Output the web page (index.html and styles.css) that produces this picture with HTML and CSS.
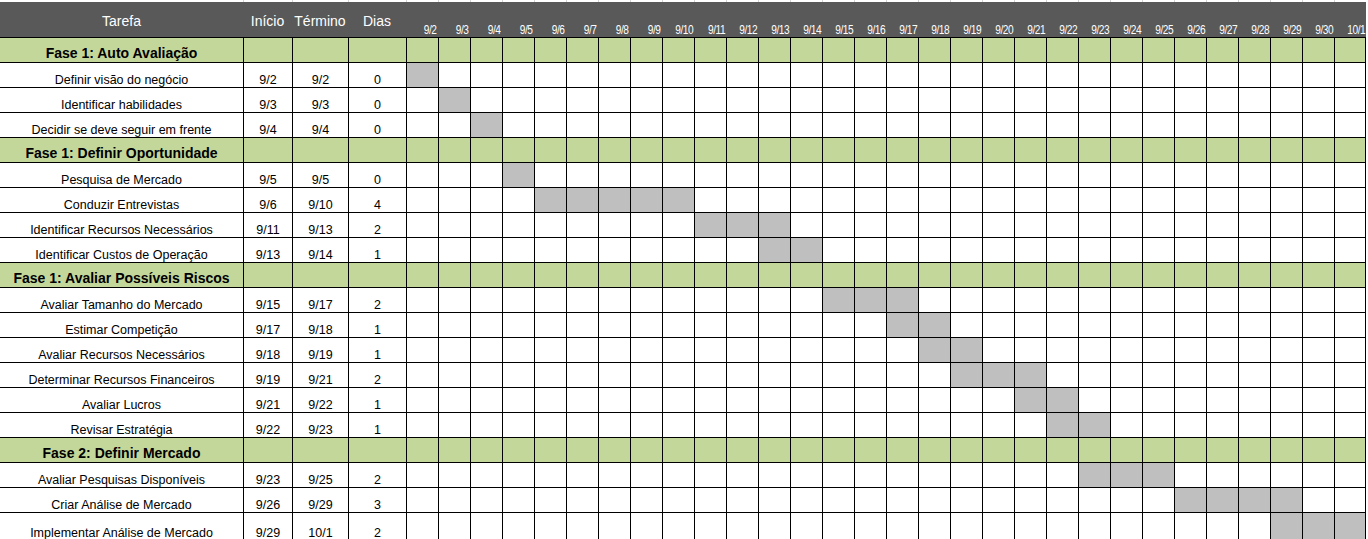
FILE: index.html
```html
<html lang="pt">
<head>
    <meta charset="UTF-8">
    <meta name="viewport" content="width=device-width, initial-scale=1.0">
    <title>Cronograma - Plano de Negócio</title>
    <link rel="stylesheet" href="styles.css">
</head>
<body>
    <div class="sheet" id="sheet"></div>
<script>
// Tarefas do cronograma: fases e atividades (nome, início, término, dias)
const tarefas = [
    { fase: 'Fase 1: Auto Avaliação' },
    ['Definir visão do negócio', '9/2', '9/2', 0],
    ['Identificar habilidades', '9/3', '9/3', 0],
    ['Decidir se deve seguir em frente', '9/4', '9/4', 0],
    { fase: 'Fase 1: Definir Oportunidade' },
    ['Pesquisa de Mercado', '9/5', '9/5', 0],
    ['Conduzir Entrevistas', '9/6', '9/10', 4],
    ['Identificar Recursos Necessários', '9/11', '9/13', 2],
    ['Identificar Custos de Operação', '9/13', '9/14', 1],
    { fase: 'Fase 1: Avaliar Possíveis Riscos' },
    ['Avaliar Tamanho do Mercado', '9/15', '9/17', 2],
    ['Estimar Competição', '9/17', '9/18', 1],
    ['Avaliar Recursos Necessários', '9/18', '9/19', 1],
    ['Determinar Recursos Financeiros', '9/19', '9/21', 2],
    ['Avaliar Lucros', '9/21', '9/22', 1],
    ['Revisar Estratégia', '9/22', '9/23', 1],
    { fase: 'Fase 2: Definir Mercado' },
    ['Avaliar Pesquisas Disponíveis', '9/23', '9/25', 2],
    ['Criar Análise de Mercado', '9/26', '9/29', 3],
    ['Implementar Análise de Mercado', '9/29', '10/1', 2]
];

// Dias do gráfico: 9/2 até 10/1
const dias = [];
for (let d = 2; d <= 30; d++) dias.push('9/' + d);
dias.push('10/1');

function indice(data) {
    const [m, d] = data.split('/').map(Number);
    return m === 9 ? d - 2 : 28 + d;
}

const sheet = document.getElementById('sheet');
let html = '';

// linha fina do topo (grade da planilha)
html += '<div class="cell top first"></div>';
for (let i = 0; i < 33; i++) html += '<div class="cell top"></div>';

// cabeçalho
html += '<div class="cell head first">Tarefa</div>';
html += '<div class="cell head">Início</div>';
html += '<div class="cell head">Término</div>';
html += '<div class="cell head">Dias</div>';
dias.forEach(d => { html += `<div class="cell head date"><span>${d}</span></div>`; });

tarefas.forEach((t, n) => {
    const ultima = n === tarefas.length - 1 ? ' tall' : '';
    if (t.fase) {
        html += `<div class="cell phase first${ultima}"><b>${t.fase}</b></div>`;
        for (let i = 0; i < 3; i++) html += `<div class="cell phase${ultima}"></div>`;
        dias.forEach((d, i) => {
            html += `<div class="cell phase${i === dias.length - 1 ? ' last' : ''}${ultima}"></div>`;
        });
        return;
    }
    const [nome, inicio, fim, qtd] = t;
    const a = indice(inicio), b = indice(fim);
    html += `<div class="cell first${ultima}">${nome}</div>`;
    html += `<div class="cell${ultima}">${inicio}</div>`;
    html += `<div class="cell${ultima}">${fim}</div>`;
    html += `<div class="cell${ultima}">${qtd}</div>`;
    dias.forEach((d, i) => {
        let cls = 'cell' + ultima;
        if (i >= a && i <= b) cls += ' bar';
        if (i === dias.length - 1) cls += ' last';
        html += `<div class="${cls}"></div>`;
    });
});

sheet.innerHTML = html;
</script>
</body>
</html>
```

FILE: styles.css
```css
body { margin: 0; background-color: #fff; font-family: "Liberation Sans", Arial, sans-serif; color: #000; }
.sheet { display: grid; grid-template-columns: 243px 49px 56px 58px repeat(30, 32px); grid-template-rows: 2px 35px repeat(19, 25px) 28px; width: 1366px; }
.cell { box-sizing: border-box; border-top: 1px solid #000; border-left: 1px solid #000; display: flex; align-items: flex-end; justify-content: center; font-size: 12.5px; line-height: 13px; white-space: nowrap; overflow: hidden; }
.cell.first { border-left: none; }
.cell.last { border-right: 1px solid #000; }
.cell.top { border-top: none; border-left-color: #d4d4d4; background-color: #fff; }
.cell.top.first { border-left: none; }
.head { background-color: #595959; color: #fff; border: none; font-size: 14px; line-height: 17px; align-items: center; padding-top: 4px; }
.head.date { border: none; align-items: flex-end; justify-content: flex-end; padding: 0 1px 0 0; font-size: 13px; line-height: 14px; }
.head.date span { display: inline-block; letter-spacing: -0.5px; transform: scaleX(0.78); transform-origin: right bottom; }
.phase { background-color: #c4d79b; }
.phase b { font-size: 14px; line-height: 15px; padding-bottom: 1px; }
.bar { background-color: #bfbfbf; }
```
